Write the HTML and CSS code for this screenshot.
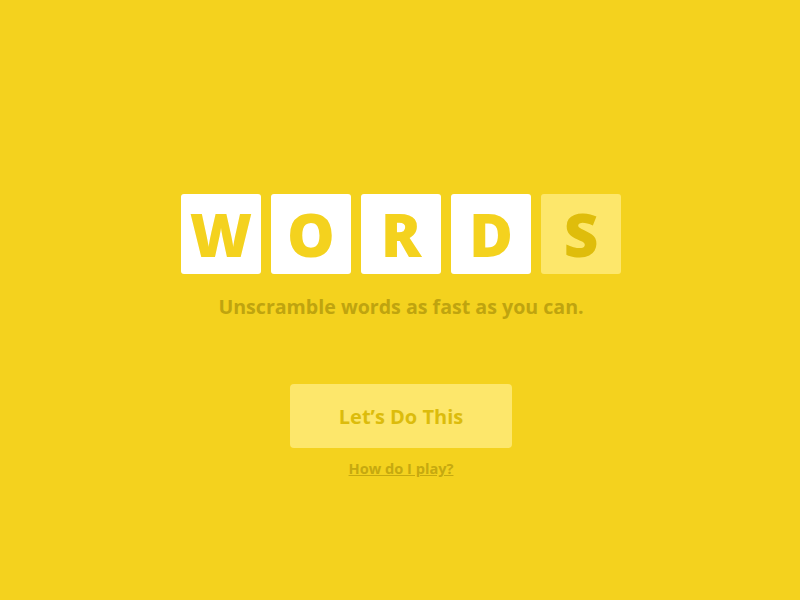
FILE: index.html
```html
<!DOCTYPE html>
<html>
<head>
<meta charset="utf-8">
<link rel="stylesheet" href="styles.css">
</head>
<body>
<main class="screen">
  <div class="logo">
    <span class="tile">W</span>
    <span class="tile">O</span>
    <span class="tile">R</span>
    <span class="tile">D</span>
    <span class="tile tile-alt">S</span>
  </div>
  <p class="tagline">Unscramble words as fast as you can.</p>
  <button class="start">Let’s Do This</button>
  <a class="help" href="#">How do I play?</a>
</main>
</body>
</html>
```

FILE: styles.css
```css
html, body {
  margin: 0;
  padding: 0;
  height: 100%;
}
body {
  background: #f4d21e;
  font-family: "Open Sans", "Liberation Sans", sans-serif;
}
.screen {
  height: 600px;
  display: flex;
  flex-direction: column;
  align-items: center;
  padding-top: 194px;
  padding-left: 2px;
  box-sizing: border-box;
}
.logo {
  display: flex;
  gap: 10px;
}
.tile {
  width: 80px;
  height: 80px;
  border-radius: 3px;
  background: #ffffff;
  color: #f4d21e;
  font-size: 60px;
  font-weight: 800;
  display: flex;
  align-items: center;
  justify-content: center;
  line-height: 1;
}
.tile-alt {
  background: #fde76b;
  color: #dfbd0b;
}
.tagline {
  margin: 19px 0 0;
  font-size: 19.6px;
  font-weight: 700;
  color: #bfa40f;
  line-height: 27px;
}
.start {
  margin-top: 64px;
  width: 222px;
  height: 64px;
  border: none;
  border-radius: 4px;
  background: #fde76b;
  color: #dcbc0c;
  font-family: inherit;
  font-size: 20px;
  font-weight: 700;
  cursor: pointer;
}
.help {
  margin-top: 10px;
  font-size: 14.6px;
  font-weight: 700;
  color: #c6a90f;
  text-decoration: underline;
}
```
